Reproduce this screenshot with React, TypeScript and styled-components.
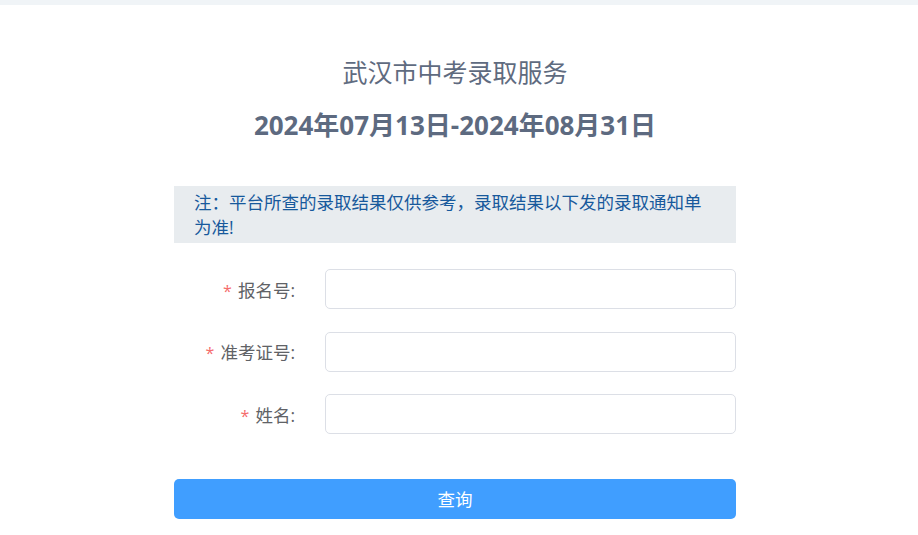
import styled, { createGlobalStyle } from 'styled-components';

const GlobalStyle = createGlobalStyle`
    html, body {
        margin: 0;
        padding: 0;
        background: #fff;
    }
    body {
        font-family: "Open Sans", "Noto Sans CJK SC", sans-serif;
    }
`;

const FIELDS = ['报名号', '准考证号', '姓名'];

const App: React.FC = () => {
    return <>
        <GlobalStyle />
        <TopBar />
        <Page>
            <Panel>
                <Title>武汉市中考录取服务</Title>
                <DateRange>2024年07月13日-2024年08月31日</DateRange>
                <Notice>注：平台所查的录取结果仅供参考，录取结果以下发的录取通知单为准!</Notice>
                <Form onSubmit={e => e.preventDefault()}>
                    {
                        FIELDS.map(field => <FormRow key={field}>
                            <Label><Required>*</Required>{field}:</Label>
                            <Input type="text" />
                        </FormRow>)
                    }
                    <SubmitButton type="submit">查询</SubmitButton>
                </Form>
            </Panel>
        </Page>
    </>;
};

const TopBar = styled.div`
    height: 5px;
    background-color: #f0f4f7;
`;

const Page = styled.main`
    padding-right: 8px;
    display: flex;
    justify-content: center;
`;

const Panel = styled.section`
    width: 562px;
    display: flex;
    flex-direction: column;
`;

const Title = styled.h1`
    margin: 50px 0 0;
    text-align: center;
    font-size: 25px;
    line-height: 34px;
    font-weight: 400;
    color: #5f6b7f;
`;

const DateRange = styled.h2`
    margin: 19px 0 0;
    text-align: center;
    font-size: 26px;
    line-height: 34px;
    font-weight: 700;
    color: #5d6a80;
`;

const Notice = styled.p`
    margin: 44px 0 0;
    padding: 4px 20px 3px;
    background-color: #e8ecef;
    color: #17599c;
    font-size: 17.5px;
    line-height: 25px;
`;

const Form = styled.form`
    margin-top: 26px;
    display: flex;
    flex-direction: column;
`;

const FormRow = styled.div`
    display: flex;
    align-items: center;
    margin-bottom: 22.5px;
`;

const Label = styled.label`
    width: 151px;
    flex: none;
    box-sizing: border-box;
    padding-right: 30px;
    text-align: right;
    font-size: 17.5px;
    color: #606266;
`;

const Required = styled.span`
    color: #f56c6c;
    margin-right: 6px;
    font-size: 16px;
`;

const Input = styled.input`
    flex: 1;
    height: 40px;
    box-sizing: border-box;
    border: 1px solid #dcdfe6;
    border-radius: 5px;
    padding: 0 15px;
    font-size: 17.5px;
    outline: none;
    background: #fff;
`;

const SubmitButton = styled.button`
    margin-top: 22px;
    height: 40px;
    border: none;
    border-radius: 5px;
    background-color: #409eff;
    color: #fff;
    font-family: "Open Sans", "Noto Sans CJK SC", sans-serif;
    font-size: 17.5px;
    cursor: pointer;
`;

export default App;
